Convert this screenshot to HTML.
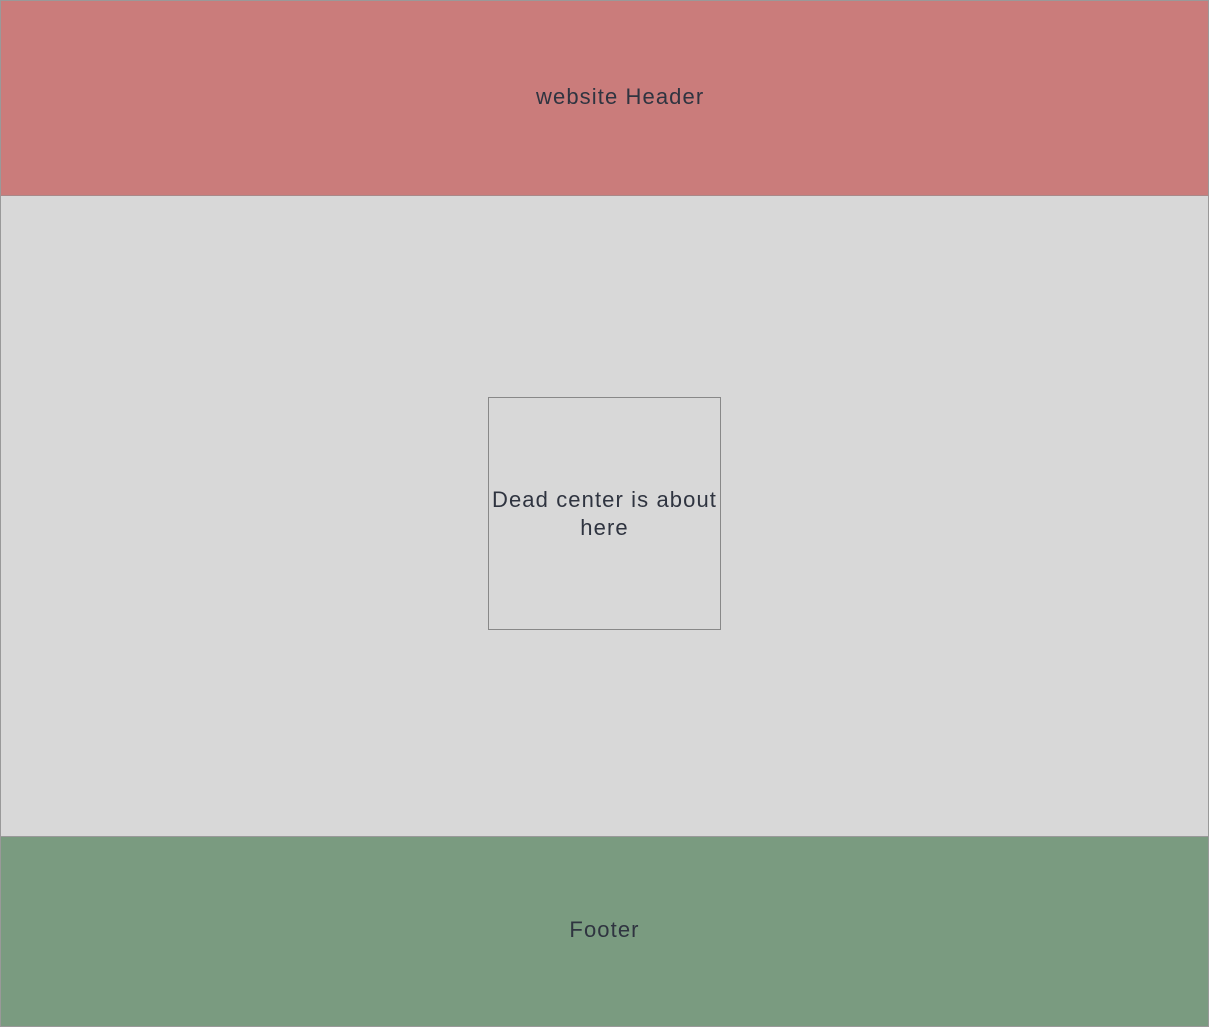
<!DOCTYPE html>
<html><head><style>
*{margin:0;padding:0;box-sizing:border-box}
html,body{width:1209px;height:1027px;overflow:hidden;background:#d8d8d8}
body{font-family:"Liberation Sans",sans-serif;color:#2f3440;font-size:22px;letter-spacing:1.1px}
.wrap{position:absolute;left:0;top:0;width:1209px;height:1027px;border:1px solid #999}
.h{position:absolute;left:0;top:0;width:1209px;height:196px;background:#ca7c7b;border:1px solid #999;border-bottom:1px solid #a88;}
.h span{position:absolute;left:535px;top:83px;white-space:nowrap}
.f{position:absolute;left:0;top:836px;width:1209px;height:191px;background:#7a9b80;border:1px solid #999}
.f span{position:absolute;left:0;width:1207px;text-align:center;top:80px}
.box{position:absolute;left:488px;top:397px;width:233px;height:233px;border:1px solid #888;display:flex;align-items:center;justify-content:center;text-align:center;line-height:28px}
</style></head><body>
<div class="wrap"></div>
<div class="h"><span>website Header</span></div>
<div class="box">Dead center is about here</div>
<div class="f"><span>Footer</span></div>
</body></html>
